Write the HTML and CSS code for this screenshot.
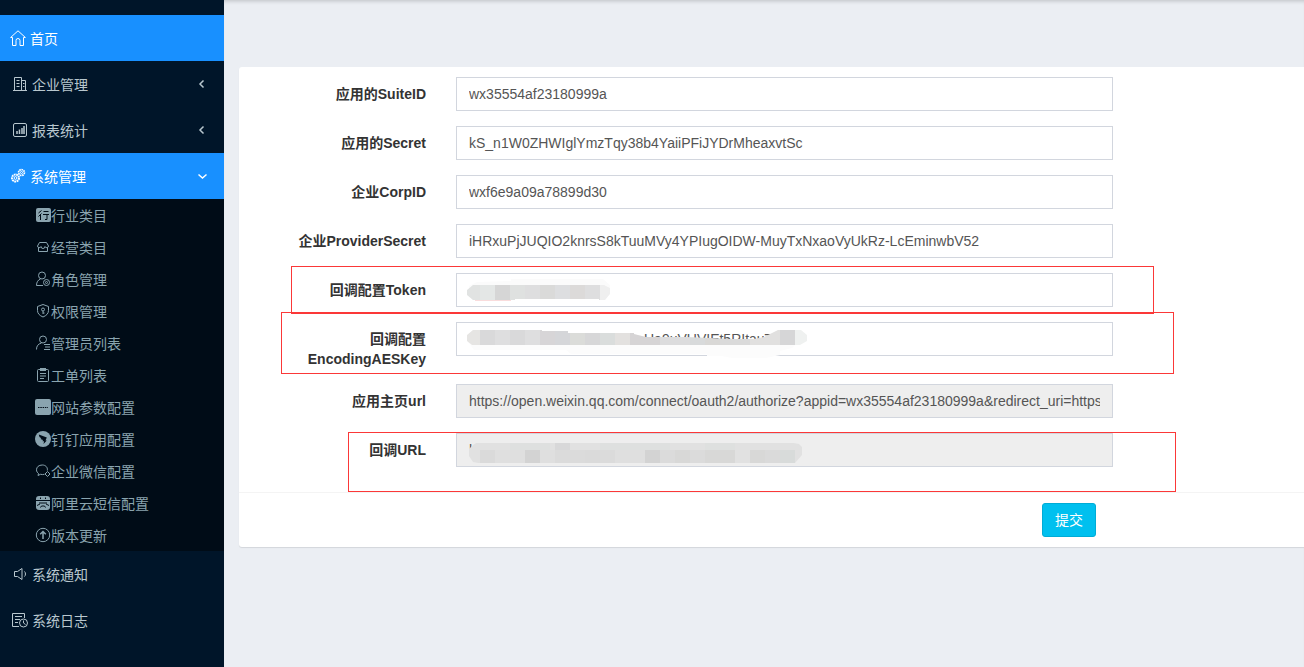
FILE: index.html
```html
<!DOCTYPE html>
<html lang="zh-CN">
<head>
  <meta charset="UTF-8">
  <meta name="viewport" content="width=device-width, initial-scale=1.0">
  <title>企业微信配置</title>
  <link rel="stylesheet" href="styles.css">
</head>
<body>
  <aside class="sidebar">
    <nav class="menu">
      <a href="#" class="menu-item active">
        <svg class="icon" viewBox="0 0 16 16"><path d="M2.500 7.500H.6L8 .8l7.400 6.700h-1.900M2.500 7.500v8h3.500V10.500a2 2 0 0 1 4 0v5h3.500v-8"/></svg>
        <span>首页</span>
      </a>
      <a href="#" class="menu-item">
        <svg class="icon" viewBox="0 0 16 16"><path d="M2.500 14V1.500h7V14M9.500 4.500h4V14M1 14.500h14M4.500 4.500h3M4.500 7.500h3M4.500 10.500h3M11 7.500h1.500M11 10.500h1.500"/></svg>
        <span>企业管理</span>
        <svg class="arrow" viewBox="0 0 10 10"><path d="M6.500 1.500 3 5l3.500 3.500"/></svg>
      </a>
      <a href="#" class="menu-item">
        <svg class="icon" viewBox="0 0 16 16"><rect x="1.500" y="1.500" width="13" height="13" rx="1.500"/><path class="bars" d="M5 12V9M7.500 12V7.500M10 12V6M12 12V4"/></svg>
        <span>报表统计</span>
        <svg class="arrow" viewBox="0 0 10 10"><path d="M6.500 1.500 3 5l3.500 3.500"/></svg>
      </a>
      <a href="#" class="menu-item active">
        <svg class="icon" viewBox="0 0 16 16"><circle cx="5.500" cy="10" r="3.500" stroke-width="2" stroke-dasharray="1.800 .6"/><circle cx="5.500" cy="10" r="1.400"/><circle cx="11.500" cy="4.500" r="2.900" stroke-width="1.800" stroke-dasharray="1.600 .6"/><circle cx="11.500" cy="4.500" r="1"/></svg>
        <span>系统管理</span>
        <svg class="arrow" viewBox="0 0 10 10"><path d="M1.500 3.500 5.500 7l4-3.500"/></svg>
      </a>
      <div class="submenu">
        <a href="#" class="submenu-item">
          <svg class="icon" viewBox="0 0 16 16"><rect class="solid" x="1" y="1" width="15" height="14" rx="2"/><path class="cut" d="M6.500 3.500 3.500 6M6.500 6.500 3.500 9.500M5.500 8v5M8.500 4.500h5M8 7.500h6M12 7.500v5h-2"/></svg>
          <span>行业类目</span>
        </a>
        <a href="#" class="submenu-item">
          <svg class="icon" viewBox="0 0 16 16"><path d="M4.500 3.500h7l2 3.500a1.800 1.800 0 0 1-3.500.5 2 2 0 0 1-4 0A1.800 1.800 0 0 1 2.500 7zM3.500 9v3.500h9V9"/></svg>
          <span>经营类目</span>
        </a>
        <a href="#" class="submenu-item">
          <svg class="icon" viewBox="0 0 16 16"><circle cx="7" cy="4.500" r="3.500"/><path d="M8 14.500H1.500c0-3.500 1.500-5.500 4-6.500"/><circle cx="11.500" cy="11.500" r="3"/><circle cx="11.500" cy="11.500" r="1"/></svg>
          <span>角色管理</span>
        </a>
        <a href="#" class="submenu-item">
          <svg class="icon" viewBox="0 0 16 16"><path d="M8 1.500 13.500 3.500v4c0 3-2 5-5.500 6.500-3.500-1.500-5.500-3.500-5.500-6.500v-4z"/><circle cx="8" cy="6.500" r="1.500"/><path d="M8 8v3M8 10h1.500"/></svg>
          <span>权限管理</span>
        </a>
        <a href="#" class="submenu-item">
          <svg class="icon" viewBox="0 0 16 16"><circle cx="8" cy="4.500" r="3.500"/><path d="M1.500 14.500c0-3.500 1.500-5.500 5-6.500M9 9.500h6M10 12h5M9 14.500h6"/></svg>
          <span>管理员列表</span>
        </a>
        <a href="#" class="submenu-item">
          <svg class="icon" viewBox="0 0 16 16"><rect x="2.500" y="2.500" width="11" height="12" rx="1"/><path d="M5 6.500h6M5 9h6M5 11.500h4"/><rect class="solid" x="5" y="1" width="6" height="3"/></svg>
          <span>工单列表</span>
        </a>
        <a href="#" class="submenu-item">
          <svg class="icon" viewBox="0 0 16 16"><rect class="solid" width="16" height="16" rx="2"/><path class="cut" d="M3 8.500h10" stroke-dasharray="1.500 .8"/></svg>
          <span>网站参数配置</span>
        </a>
        <a href="#" class="submenu-item">
          <svg class="icon" viewBox="0 0 16 16"><circle class="solid" cx="8" cy="8" r="8"/><path class="hole" d="M3.800 3.500 11.800 6.500l-1.300 3h1.300L8.500 13l.6-2.700H7.500L8 9 5.500 8l.8-.8L4.500 6z"/></svg>
          <span>钉钉应用配置</span>
        </a>
        <a href="#" class="submenu-item">
          <svg class="icon" viewBox="0 0 16 16"><path d="M12.300 7.500c.6-3.500-2-5.500-5-5.500-3.500 0-5.800 2-5.800 4.800 0 1.700.8 2.800 2 3.700L3 12.500l2.500-1.200c1.500.4 2.500.3 4 0"/><path d="M12.500 8.500 15 11l-2.500 2.500L10 11z"/></svg>
          <span>企业微信配置</span>
        </a>
        <a href="#" class="submenu-item">
          <svg class="icon" viewBox="0 0 16 16"><rect class="solid" x="1" y="1" width="14" height="14" rx="3"/><path class="cut" d="M1 5.500h14M4 8h8M2 10.500l3-1.500M14 10.500l-3-1.500M5.500 2.500v1.500M10.500 2.500v1.500M5.500 12.500l1-1.500h3l1 1.500"/></svg>
          <span>阿里云短信配置</span>
        </a>
        <a href="#" class="submenu-item">
          <svg class="icon" viewBox="0 0 16 16"><circle cx="8" cy="8" r="6.700"/><path class="bars" d="M8 12V4.500M5.200 7.200 8 4.500l2.800 2.700"/></svg>
          <span>版本更新</span>
        </a>
      </div>
      <a href="#" class="menu-item">
        <svg class="icon" viewBox="0 0 16 16"><path d="M2.500 5.500h3l4.500-3v11l-4.500-3h-3zM12.500 5.500c1.300 1 1.300 4 0 5"/></svg>
        <span>系统通知</span>
      </a>
      <a href="#" class="menu-item">
        <svg class="icon" viewBox="0 0 16 16"><path d="M7 14.500H.5V1.500h12V6M3 4.500h7M3 7.500h5M3 10.500h3"/><circle cx="11.500" cy="11" r="4"/><path d="M11.500 8.500V11l2 1.500"/></svg>
        <span>系统日志</span>
      </a>
    </nav>
  </aside>

  <main class="content">
    <form class="box">
      <div class="box-body">
        <div class="form-group">
          <label for="suiteId">应用的SuiteID</label>
          <div class="control"><input type="text" id="suiteId" value="wx35554af23180999a"></div>
        </div>
        <div class="form-group">
          <label for="secret">应用的Secret</label>
          <div class="control"><input type="text" id="secret" value="kS_n1W0ZHWIglYmzTqy38b4YaiiPFiJYDrMheaxvtSc"></div>
        </div>
        <div class="form-group">
          <label for="corpId">企业CorpID</label>
          <div class="control"><input type="text" id="corpId" value="wxf6e9a09a78899d30"></div>
        </div>
        <div class="form-group">
          <label for="providerSecret">企业ProviderSecret</label>
          <div class="control"><input type="text" id="providerSecret" value="iHRxuPjJUQIO2knrsS8kTuuMVy4YPIugOIDW-MuyTxNxaoVyUkRz-LcEminwbV52"></div>
        </div>
        <div class="form-group">
          <label for="token">回调配置Token</label>
          <div class="control">
            <input type="text" id="token">
            <svg class="mosaic" viewBox="0 0 360 40">
              <clipPath id="tokenShape"><path d="M17 12h131l6 3v6l-5 6h-6v-1H59v1H17l-6-5v-5z"/></clipPath>
              <path fill="#fbfbfb" d="M13 13l8-4 34-1V6h92l7 6v5H13z"/>
              <g clip-path="url(#tokenShape)">
                <path fill="#e1e3e2" d="M9 10h15v20H9z"/>
                <path fill="#e4e7e6" d="M24 10h15v20H24z"/>
                <path fill="#d6d6d6" d="M39 10h15v20H39z"/>
                <path fill="#dfe1e0" d="M54 10h15v20H54z"/>
                <path fill="#dededf" d="M69 10h15v20H69z"/>
                <path fill="#dadad9" d="M84 10h15v20H84z"/>
                <path fill="#dddee0" d="M99 10h15v20H99z"/>
                <path fill="#dcdad9" d="M114 10h15v20h-15z"/>
                <path fill="#dededf" d="M129 10h15v20h-15z"/>
                <path fill="#efefef" d="M144 10h15v20h-15z"/>
              </g>
              <path fill="#f9dcdc" d="M19 27h36v1H19z"/>
            </svg>
          </div>
          <div class="mark mark-token"></div>
        </div>
        <div class="form-group">
          <label for="aesKey">回调配置EncodingAESKey</label>
          <div class="control">
            <input type="text" id="aesKey">
            <svg class="mosaic" viewBox="0 0 360 40">
              <text x="188" y="22">Ua9uVUVIEt5RItauTk</text>
              <path fill="#fff" d="M185 8h140v4H185z"/>
              <path fill="#fcfcfc" d="M12 20h330l-6 6-12 3v4l-14 3h-34l-10-2h-15v-2H115l-5-4H18z"/>
              <clipPath id="aesShape"><path d="M17 8h69v1h26v2h66v1l12 3h40l24 1 20 1h24l10-2 8-4 6-3h23l6 5v6l-7 4H16l-5-4v-6z"/></clipPath>
              <g clip-path="url(#aesShape)">
                <path fill="#e6e5e3" d="M9 6h15v20H9z"/>
                <path fill="#d9d9da" d="M24 6h15v20H24z"/>
                <path fill="#dededf" d="M39 6h15v20H39z"/>
                <path fill="#d9d9da" d="M54 6h15v20H54z"/>
                <path fill="#dededf" d="M69 6h15v20H69z"/>
                <path fill="#d7d5d7" d="M84 6h15v20H84z"/>
                <path fill="#d5d6d9" d="M99 6h15v20H99z"/>
                <path fill="#dbdcd9" d="M114 6h15v20h-15z"/>
                <path fill="#d7d7d8" d="M129 6h15v20h-15z"/>
                <path fill="#dadddc" d="M144 6h15v20h-15z"/>
                <path fill="#e3e1df" d="M159 6h15v20h-15z"/>
                <path fill="#d6d4d5" d="M174 6h30v20h-30z"/>
                <path fill="#dcdcdd" d="M204 6h30v20h-30z"/>
                <path fill="#d8dadb" d="M234 6h15v20h-15z"/>
                <path fill="#d9d8d6" d="M249 6h15v20h-15z"/>
                <path fill="#dadada" d="M264 6h30v20h-30z"/>
                <path fill="#e1e0df" d="M294 6h30v20h-30z"/>
                <path fill="#d6d6d7" d="M324 6h15v20h-15z"/>
                <path fill="#eff1f0" d="M339 6h15v20h-15z"/>
              </g>
            </svg>
          </div>
          <div class="mark mark-aes"></div>
        </div>
        <div class="form-group">
          <label for="homeUrl">应用主页url</label>
          <div class="control"><input type="text" id="homeUrl" readonly value="https://open.weixin.qq.com/connect/oauth2/authorize?appid=wx35554af23180999a&amp;redirect_uri=https"></div>
        </div>
        <div class="form-group">
          <label for="callbackUrl">回调URL</label>
          <div class="control">
            <input type="text" id="callbackUrl" readonly value="h">
            <svg class="mosaic" viewBox="0 0 360 40">
              <clipPath id="urlShape"><path d="M20 10h318l5 1 3 3v8l-7 8H22l-5-1-4-6v-7l4-4z"/></clipPath>
              <g clip-path="url(#urlShape)">
                <path fill="#e1e1e1" d="M9 8h342v24H9z"/>
                <path fill="#dee0df" d="M54 8h40v9H54zM144 8h70v9h-70zM249 8h30v9h-30z"/>
                <path fill="#d8d8d9" d="M99 8h15v9H99z"/>
                <path fill="#dadada" d="M24 17h15v15H24zM129 17h15v15h-15zM309 17h15v15h-15z"/>
                <path fill="#dfdfdf" d="M39 17h30v15H39zM84 17h15v15H84zM159 17h30v15h-30z"/>
                <path fill="#d3d3d3" d="M69 17h15v15H69zM189 17h15v15h-15z"/>
                <path fill="#dbdbdb" d="M99 17h30v15H99zM144 17h15v15h-15zM204 17h15v15h-15zM234 17h15v15h-15z"/>
                <path fill="#d8d8d7" d="M219 17h15v15h-15zM249 17h30v15h-30zM294 17h15v15h-15z"/>
                <path fill="#d8dbda" d="M324 17h15v15h-15z"/>
              </g>
            </svg>
          </div>
          <div class="mark mark-url"></div>
        </div>
      </div>
      <div class="box-footer">
        <button type="submit">提交</button>
      </div>
    </form>
  </main>
</body>
</html>
```
FILE: styles.css
```css
* {
  box-sizing: border-box;
}

body {
  margin: 0;
  min-height: 100vh;
  display: flex;
  background-color: #ebeef3;
  color: #333;
  font-family: "Liberation Sans", "Noto Sans CJK SC", sans-serif;
  font-size: 14px;
  line-height: 20px;
}

/* 侧边菜单 */
.sidebar {
  flex: 0 0 224px;
  padding-top: 15px;
  background-color: #001529;
}

.menu-item,
.submenu-item {
  display: flex;
  align-items: center;
  text-decoration: none;
}

.menu-item span,
.submenu-item span {
  padding-top: 2px;
}

.menu-item {
  gap: 4px;
  height: 46px;
  padding: 0 17px 0 12px;
  color: #b8c7ce;
}

.menu-item.active {
  padding-left: 10px;
  background-color: #1890ff;
  color: #fff;
}

.submenu {
  background-color: #000c17;
}

.submenu-item {
  height: 32px;
  padding-left: 35px;
  color: #8aa4af;
}

.icon {
  width: 16px;
  height: 16px;
}

.icon,
.arrow {
  fill: none;
  stroke: currentColor;
}

.arrow {
  width: 10px;
  height: 10px;
  margin-left: auto;
  stroke-width: 1.5;
}

.bars {
  stroke-width: 1.5;
}

.solid {
  fill: currentColor;
  stroke: none;
}

.cut {
  stroke: #000c17;
}

.hole {
  fill: #000c17;
  stroke: none;
}

/* 表单 */
.content {
  flex: 1;
  min-width: 0;
  padding: 67px 0 0 15px;
  box-shadow: inset 0 4px 4px -3px rgba(0, 0, 0, 0.2);
}

.box {
  background-color: #fff;
  border-radius: 3px 0 0 3px;
  box-shadow: 0 1px 1px rgba(0, 0, 0, 0.1);
}

.box-body {
  padding: 10px 0;
}

.form-group {
  position: relative;
  display: flex;
  align-items: flex-start;
  gap: 30px;
  margin-bottom: 15px;
  padding: 0 191px 0 37px;
}

.form-group label {
  flex: 0 0 150px;
  padding-top: 7px;
  text-align: right;
  font-weight: bold;
}

.control {
  position: relative;
  flex: 1;
}

.control input {
  display: block;
  width: 100%;
  height: 34px;
  padding: 6px 12px;
  border: 1px solid #d2d6de;
  border-radius: 0;
  background-color: #fff;
  color: #555;
  font: inherit;
}

.control input[readonly] {
  background-color: #eee;
}

.mosaic {
  position: absolute;
  top: 0;
  left: 0;
  width: 360px;
  height: 40px;
  pointer-events: none;
}

.mosaic text {
  fill: #555;
}

/* 红色标注框 */
.mark {
  position: absolute;
  border: 1px solid #fb3838;
  pointer-events: none;
}

.mark-token {
  inset: -7px 150px -7px 52px;
}

.mark-aes {
  inset: -10px 130px -5px 42px;
}

.mark-url {
  inset: -1px 128px -25px 109px;
}

.box-footer {
  display: flex;
  justify-content: flex-end;
  padding: 10px 208px 10px 10px;
  border-top: 1px solid #f4f4f4;
}

.box-footer button {
  height: 34px;
  padding: 6px 12px;
  border: 1px solid #00acd6;
  border-radius: 3px;
  background-color: #00c0ef;
  color: #fff;
  font: inherit;
  cursor: pointer;
}
```
